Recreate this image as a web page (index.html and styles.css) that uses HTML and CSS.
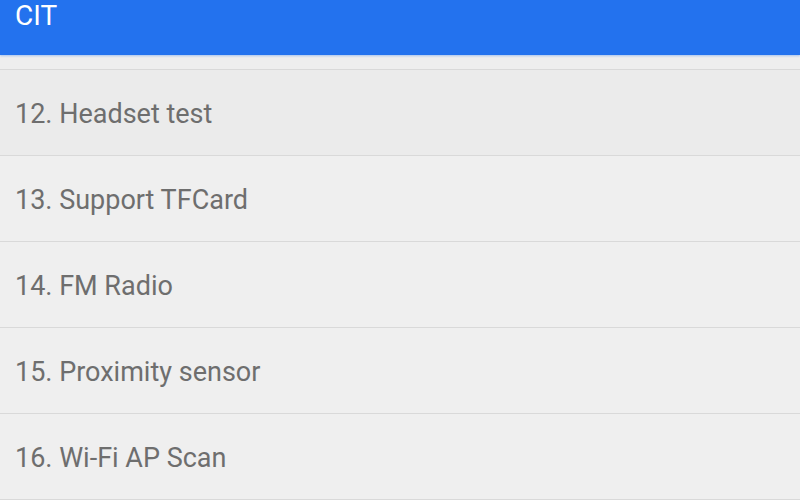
FILE: index.html
```html
<!DOCTYPE html>
<html lang="en">
	<head>
		<meta charset="UTF-8" />
		<meta name="viewport" content="width=device-width, initial-scale=1.0" />
		<title>CIT</title>
		<link rel="stylesheet" href="styles.css">
	</head>
	<body>
		<div class="toolbar">
			<span class="title">CIT</span>
		</div>

		<ul class="test-list">
			<li class="item active">12. Headset test</li>
			<li class="item">13. Support TFCard</li>
			<li class="item">14. FM Radio</li>
			<li class="item">15. Proximity sensor</li>
			<li class="item">16. Wi-Fi AP Scan</li>
		</ul>
	</body>
</html>
```

FILE: styles.css
```css
html,
body {
	margin: 0;
	padding: 0;
	height: 100%;
	overflow: hidden;
}
body {
	font-family: Roboto, "Noto Sans", sans-serif;
	background: #eeeeee;
}
.toolbar {
	height: 56px;
	background: #2372ee;
	box-shadow: 0 1px 2px rgba(35, 114, 238, 0.35);
	padding: 0 15px;
	box-sizing: border-box;
}
.title {
	display: block;
	color: #ffffff;
	font-size: 28px;
	line-height: 34px;
	margin-top: -1px;
}
.test-list {
	list-style: none;
	margin: 14px 0 0;
	padding: 0;
	border-top: 1px solid #d9d9d9;
}
.item {
	display: flex;
	align-items: center;
	height: 82px;
	padding: 3px 15px 0;
	border-bottom: 1px solid #d9d9d9;
	background: #efefef;
	color: #6e6e6e;
	font-size: 27px;
}
.item.active {
	background: #ebebeb;
}
```
